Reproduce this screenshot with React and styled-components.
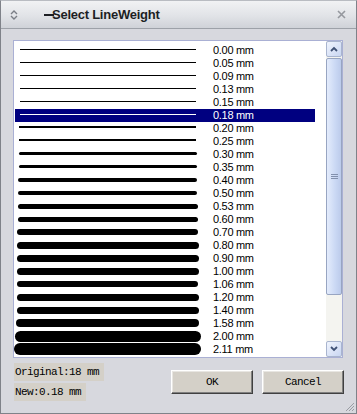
import React from "react";
import styled, { createGlobalStyle } from "styled-components";

const GlobalStyle = createGlobalStyle`
  html, body {
    margin: 0;
    padding: 0;
    background: #d7d8de;
  }
  * {
    box-sizing: border-box;
  }
`;

const Window = styled.div`
  position: relative;
  width: 357px;
  height: 414px;
  display: flex;
  flex-direction: column;
  background: #d7d8de;
  border: 1px solid #7f8289;
  border-top-color: #b9bcc2;
  overflow: hidden;
`;

const TitleBar = styled.div`
  height: 28px;
  flex: none;
  display: flex;
  align-items: center;
  padding: 0 10px 0 8px;
  background: linear-gradient(#f1f2f4, #e1e3e7 55%, #cfd2d8);
  border-bottom: 1px solid #9da1a8;
`;

const TitleIcon = styled.svg`
  width: 10px;
  height: 12px;
  margin-right: 25px;
`;

const TitleText = styled.div`
  position: relative;
  font-family: "Liberation Sans", Arial, sans-serif;
  font-weight: bold;
  font-size: 13px;
  letter-spacing: -0.25px;
  color: #1d1f24;
  padding-left: 8px;
  flex: 1;
`;

// odd little dash drawn over the first letter
const Dash = styled.span`
  position: absolute;
  left: 0;
  top: 7px;
  width: 10px;
  height: 2px;
  background: #1d1f24;
`;

const CloseIcon = styled.svg`
  width: 9px;
  height: 9px;
`;

const Body = styled.div`
  flex: 1;
  display: flex;
  flex-direction: column;
  padding: 11px 12px 0 12px;
`;

const ListBox = styled.div`
  width: 330px;
  height: 318px;
  display: flex;
  background: #fff;
  border: 1px solid #aab0d4;
`;

const Items = styled.div`
  width: 300px;
  margin: 3px 11px 0 1px;
  display: flex;
  flex-direction: column;
`;

const Row = styled.div`
  height: 13px;
  display: grid;
  grid-template-columns: 198px 1fr;
  align-items: center;
  background: ${(p) => (p.$selected ? "#000080" : "transparent")};
  color: ${(p) => (p.$selected ? "#fff" : "#000")};
`;

const LineCell = styled.div`
  display: flex;
  align-items: center;
  padding-left: 5px;
  height: 13px;
  padding-bottom: ${(p) => (p.$t < 4 ? 3 : 1)}px;
`;

const Line = styled.div`
  width: ${(p) => 175 + p.$t}px;
  height: ${(p) => p.$t}px;
  margin-left: ${(p) => -Math.floor(p.$t / 2)}px;
  border-radius: ${(p) => (p.$t > 2 ? p.$t / 2 : 0)}px;
  background: ${(p) => (p.$selected ? "#fff" : "#000")};
`;

const Label = styled.div`
  font-family: "Liberation Sans", Arial, sans-serif;
  font-size: 11px;
  letter-spacing: -0.3px;
  line-height: 13px;
  white-space: nowrap;
`;

const ScrollBar = styled.div`
  width: 16px;
  height: 316px;
  display: flex;
  flex-direction: column;
  background: #f4f4f0;
`;

const ScrollButton = styled.div`
  width: 16px;
  height: 16px;
  flex: none;
  display: flex;
  align-items: center;
  justify-content: center;
  background: linear-gradient(135deg, #f0f4fd, #c9d6f2);
  border: 1px solid #a9b5cf;
  border-radius: 2px;
`;

const Thumb = styled.div`
  margin-top: 1px;
  height: 237px;
  flex: none;
  display: flex;
  align-items: center;
  justify-content: center;
  background: linear-gradient(90deg, #e4ecfc, #cad8f4 60%, #bccbeb);
  border: 1px solid #98a5c2;
  border-radius: 2px;
`;

const Grip = styled.svg`
  width: 7px;
  height: 7px;
`;

const Track = styled.div`
  flex: 1;
`;

const Footer = styled.div`
  display: flex;
  align-items: flex-start;
  padding-left: 1px;
`;

const Info = styled.div`
  display: flex;
  flex-direction: column;
  gap: 2px;
  margin-top: 5px;
  width: 158px;
`;

const InfoLine = styled.div`
  align-self: flex-start;
  padding: 3px 5px 3px 1px;
  background: #d4d0c8;
  font-family: "Liberation Mono", "Courier New", monospace;
  font-size: 11px;
  letter-spacing: -0.6px;
  line-height: 12px;
  color: #000;
`;

const Buttons = styled.div`
  display: flex;
  gap: 9px;
  margin-top: 12px;
`;

const Button = styled.button`
  width: 82px;
  height: 24px;
  padding: 0;
  background: #d4d0c8;
  border: 1px solid;
  border-color: #fff #404040 #404040 #fff;
  box-shadow: inset -1px -1px 0 #808080, inset 1px 1px 0 #e8e6e2;
  font-family: "Liberation Mono", "Courier New", monospace;
  font-size: 11px;
  letter-spacing: -0.6px;
  color: #000;
`;

const Grabber = styled.svg`
  position: absolute;
  right: 1px;
  bottom: 1px;
  width: 11px;
  height: 11px;
`;

const weights = [
  ["0.00", 1], ["0.05", 1], ["0.09", 1], ["0.13", 1], ["0.15", 1], ["0.18", 1],
  ["0.20", 2], ["0.25", 2], ["0.30", 3], ["0.35", 3], ["0.40", 4], ["0.50", 4],
  ["0.53", 5], ["0.60", 5], ["0.70", 6], ["0.80", 7], ["0.90", 7], ["1.00", 7],
  ["1.06", 6], ["1.20", 7], ["1.40", 7], ["1.58", 8], ["2.00", 11], ["2.11", 12],
];

const selected = "0.18";

export default function App() {
  return (
    <>
      <GlobalStyle />
      <Window>
        <TitleBar>
          <TitleIcon viewBox="0 0 10 12">
            <path d="M2 5 L5 2 L8 5 M2 7 L5 10 L8 7" fill="none" stroke="#7a7e86" strokeWidth="1.4" />
          </TitleIcon>
          <TitleText>
            <Dash />
            Select LineWeight
          </TitleText>
          <CloseIcon viewBox="0 0 9 9">
            <path d="M1 1 L8 8 M8 1 L1 8" stroke="#95989e" strokeWidth="1.6" />
          </CloseIcon>
        </TitleBar>
        <Body>
          <ListBox>
            <Items>
              {weights.map(([mm, t]) => {
                const sel = mm === selected;
                return (
                  <Row key={mm} $selected={sel}>
                    <LineCell $t={t}>
                      <Line $t={t} $selected={sel} />
                    </LineCell>
                    <Label>{mm} mm</Label>
                  </Row>
                );
              })}
            </Items>
            <ScrollBar>
              <ScrollButton>
                <svg width="8" height="6" viewBox="0 0 8 6">
                  <path d="M1 5 L4 2 L7 5" fill="none" stroke="#3f5175" strokeWidth="1.8" />
                </svg>
              </ScrollButton>
              <Thumb>
                <Grip viewBox="0 0 7 7">
                  <path d="M0 1.5 H7 M0 3.5 H7 M0 5.5 H7" stroke="#8290ad" strokeWidth="1" />
                </Grip>
              </Thumb>
              <Track />
              <ScrollButton>
                <svg width="8" height="6" viewBox="0 0 8 6">
                  <path d="M1 1 L4 4 L7 1" fill="none" stroke="#3f5175" strokeWidth="1.8" />
                </svg>
              </ScrollButton>
            </ScrollBar>
          </ListBox>
          <Footer>
            <Info>
              <InfoLine>Original:18 mm</InfoLine>
              <InfoLine>New:0.18 mm</InfoLine>
            </Info>
            <Buttons>
              <Button>OK</Button>
              <Button>Cancel</Button>
            </Buttons>
          </Footer>
        </Body>
        <Grabber viewBox="0 0 11 11">
          <path d="M10 2 L2 10 M10 5 L5 10 M10 8 L8 10" stroke="#9a9da3" strokeWidth="1" />
        </Grabber>
      </Window>
    </>
  );
}
